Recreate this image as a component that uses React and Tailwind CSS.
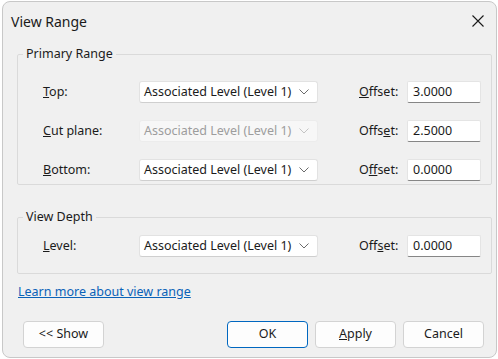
import React from "react";

const font = { fontFamily: '"Noto Sans", "Open Sans", sans-serif' };

function Chevron({ disabled }) {
  return (
    <svg width="10" height="6" viewBox="0 0 10 6" className="shrink-0">
      <polyline
        points="0.5,0.5 5,5 9.5,0.5"
        fill="none"
        stroke={disabled ? "#c4c4c4" : "#6b6b6b"}
        strokeWidth="1"
      />
    </svg>
  );
}

function Dropdown({ disabled }) {
  return (
    <div
      className={
        "w-[179px] h-[22px] flex items-center justify-between pl-[4px] pr-[8px] rounded-[3px] border " +
        (disabled
          ? "bg-[#f7f7f7] border-[#ececec] text-[#9d9d9d]"
          : "bg-white border-[#e2e2e2] border-b-[#cfcfcf] text-[#1b1b1b]")
      }
    >
      <span>Associated Level (Level 1)</span>
      <Chevron disabled={disabled} />
    </div>
  );
}

function Row({ label, offsetLabel, value, disabled }) {
  return (
    <div className="flex items-center h-[22px]">
      <div className="w-[96px]">{label}</div>
      <Dropdown disabled={disabled} />
      <div className="w-[48px] ml-[41px]">{offsetLabel}</div>
      <div className="w-[74px] h-[22px] flex items-center pl-[5px] bg-white border border-[#e4e4e4] border-b-[#868686] rounded-[2px]">
        {value}
      </div>
    </div>
  );
}

function Btn({ children, primary, className = "" }) {
  return (
    <div
      className={
        "w-[81px] h-[27px] flex items-center justify-center rounded-[4px] border bg-[#fdfdfd] " +
        (primary ? "border-[#0067c0]" : "border-[#d3d3d3]") +
        " " +
        className
      }
    >
      {children}
    </div>
  );
}

export default function App() {
  return (
    <div className="w-[498px] h-[359px] bg-white pt-[1px] pl-[2px]" style={font}>
      <div className="w-[495px] h-[357px] rounded-[8px] border border-[#c8c8c8] bg-[#f0f0f0] text-[12.5px] text-[#1b1b1b] flex flex-col">
        {/* title bar */}
        <div className="h-[38px] flex items-center justify-between pl-[8px] pr-[12px]">
          <span className="text-[14px] text-[#1a1a1a]">View Range</span>
          <svg width="12" height="12" viewBox="0 0 12 12">
            <path d="M0.5 0.5 L11.5 11.5 M11.5 0.5 L0.5 11.5" stroke="#1a1a1a" strokeWidth="1.1" />
          </svg>
        </div>

        {/* Primary Range */}
        <fieldset className="ml-[14px] mt-[7px] w-[475px] border border-[#dadada] rounded-[2px] pl-[5px] pt-[20px] pb-[3px]">
          <legend className="px-[3px] leading-[14px]">Primary Range</legend>
          <div className="pl-[20px] flex flex-col gap-[17px]">
            <Row
              label={<><u>T</u>op:</>}
              offsetLabel={<><u>O</u>ffset:</>}
              value="3.0000"
            />
            <Row
              label={<><u>C</u>ut plane:</>}
              offsetLabel={<>Offs<u>e</u>t:</>}
              value="2.5000"
              disabled
            />
            <Row
              label={<><u>B</u>ottom:</>}
              offsetLabel={<>O<u>f</u>fset:</>}
              value="0.0000"
            />
          </div>
        </fieldset>

        {/* View Depth */}
        <fieldset className="ml-[14px] mt-[25px] w-[475px] border border-[#dadada] rounded-[2px] pl-[5px] pt-[11px] pb-[16px]">
          <legend className="px-[3px] leading-[14px]">View Depth</legend>
          <div className="pl-[20px]">
            <Row
              label={<><u>L</u>evel:</>}
              offsetLabel={<>Off<u>s</u>et:</>}
              value="0.0000"
            />
          </div>
        </fieldset>

        <div className="ml-[15px] mt-[10px] text-[#0a62b8] underline leading-[16px]">
          Learn more about view range
        </div>

        <div className="mt-[21px] flex items-center pl-[20px]">
          <Btn>&lt;&lt; Show</Btn>
          <div className="ml-[123px] flex gap-[7px]">
            <Btn primary>OK</Btn>
            <Btn><span><u>A</u>pply</span></Btn>
            <Btn>Cancel</Btn>
          </div>
        </div>
      </div>
    </div>
  );
}
